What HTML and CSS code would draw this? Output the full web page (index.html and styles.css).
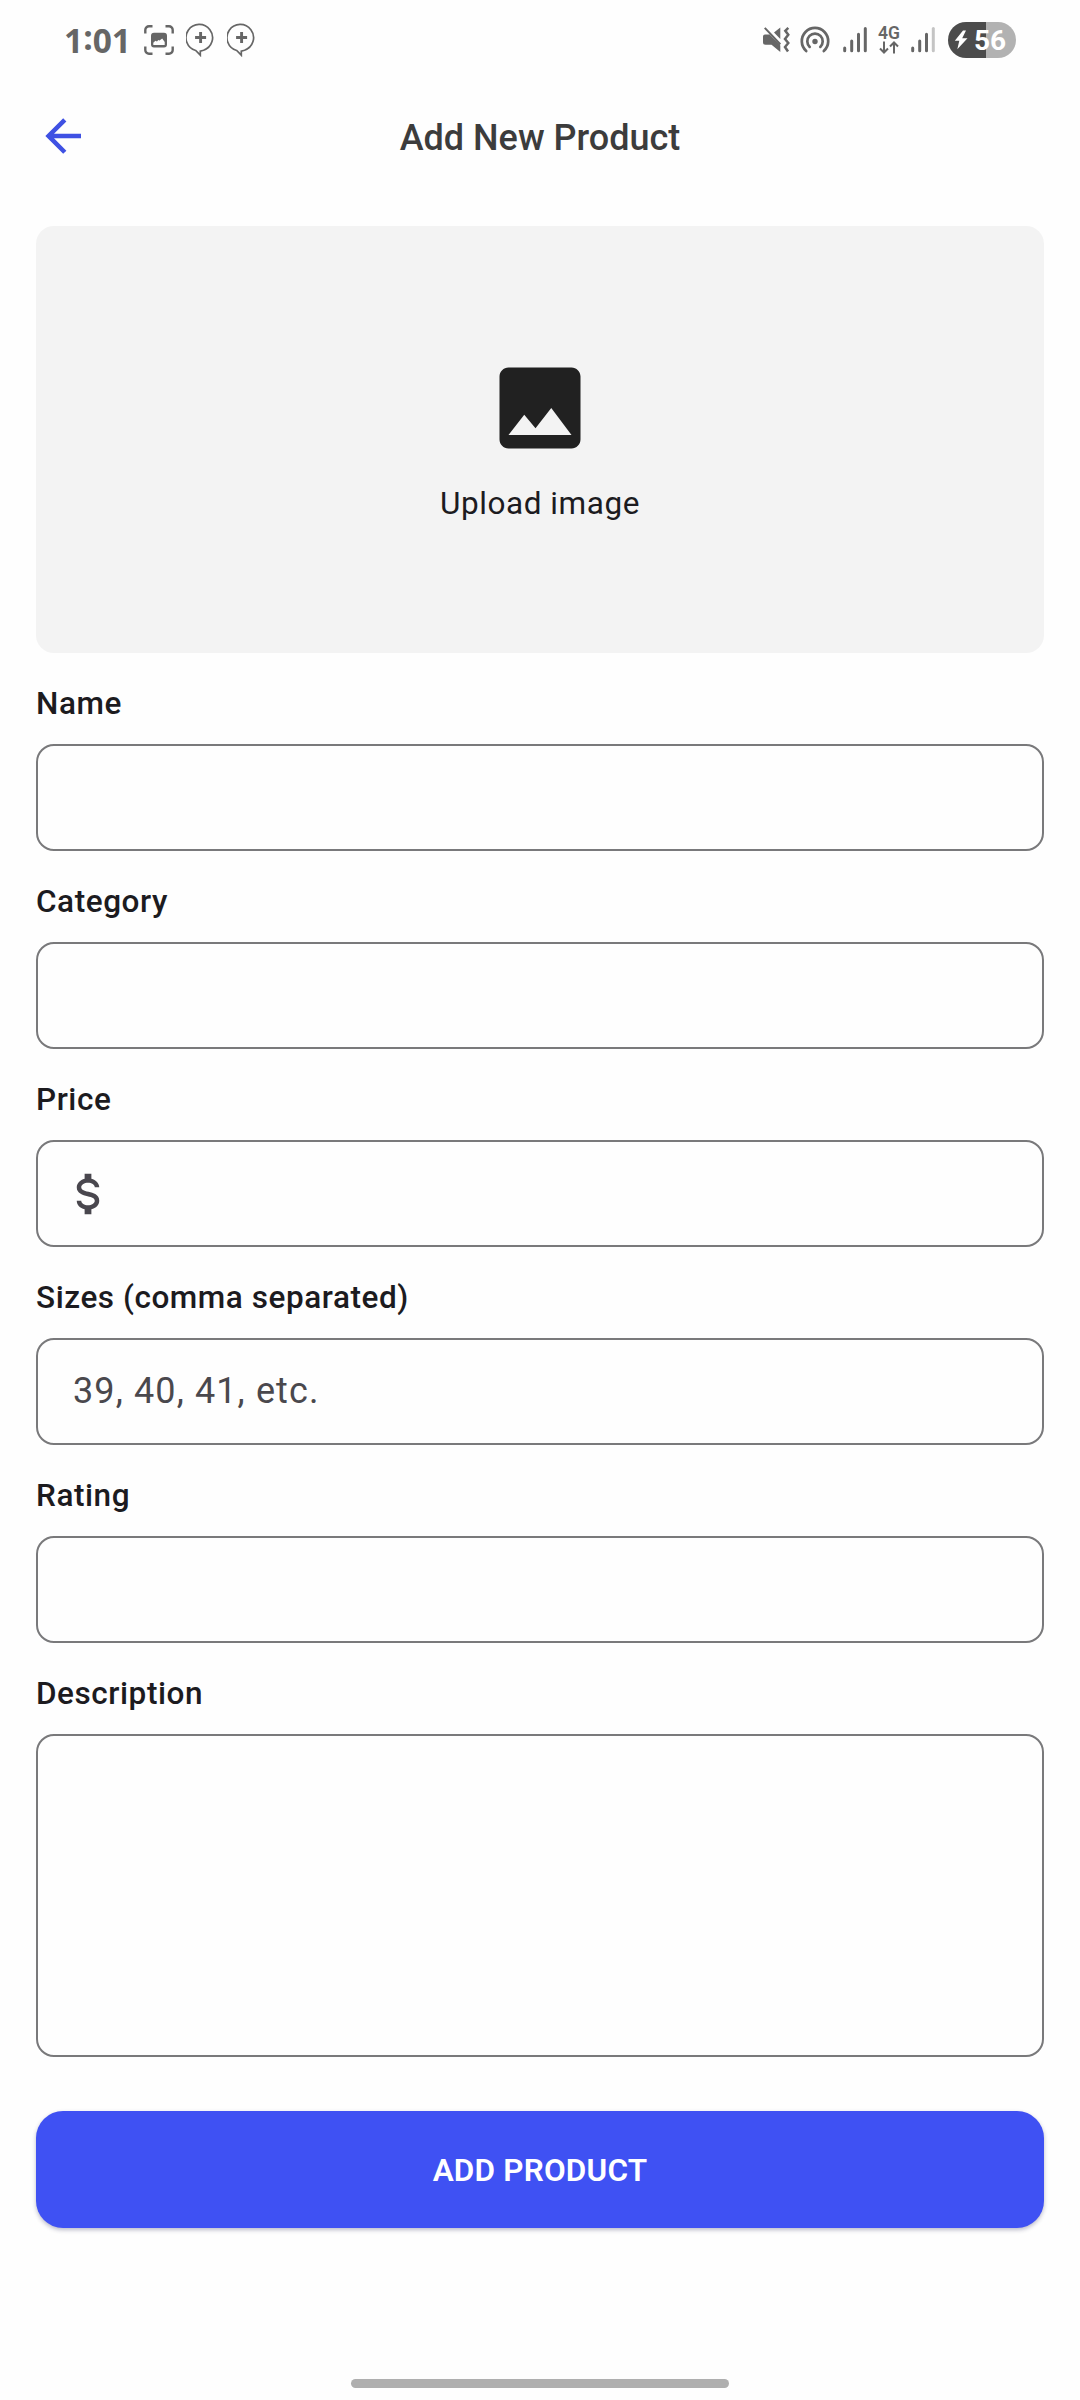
FILE: index.html
```html
<!DOCTYPE html>
<html lang="en">
<head>
<meta charset="utf-8">
<title>Add New Product</title>
<link rel="stylesheet" href="styles.css">
</head>
<body>
<div class="screen">
  <div class="status">
    <span class="clock">1<span class="colon">:</span>01</span>
    <svg class="ic-capture" width="30" height="30" viewBox="0 0 30 30">
      <path d="M1.3 8.500V5a3.700 3.700 0 0 1 3.700-3.700h3.500M21.500 1.300H25A3.700 3.700 0 0 1 28.700 5v3.500M28.700 21.500V25a3.700 3.700 0 0 1-3.700 3.700h-3.500M8.500 28.700H5A3.700 3.700 0 0 1 1.300 25v-3.500" fill="none" stroke="#666" stroke-width="2.400"/>
      <path fill-rule="evenodd" d="M10 7.700h10a3 3 0 0 1 3 3V19.500a3 3 0 0 1-3 3H10a3 3 0 0 1-3-3v-8.800a3 3 0 0 1 3-3zM9.300 20H20.700V17l-2.500-3.500-2.700 2-1.200-.5-1.300 1.500-1.600-.8-2.100 2z" fill="#666"/>
    </svg>
    <svg class="ic-chat" width="30" height="34" viewBox="0 0 30 34">
      <path d="M14.300 28.200v4l-4.600-4.700A13.300 13.300 0 1 1 17.500 27.300z" fill="none" stroke="#666" stroke-width="1.700"/>
      <path d="M14.600 9v11M9.100 14.500h11" stroke="#666" stroke-width="2.900"/>
    </svg>
    <svg class="ic-chat2" width="30" height="34" viewBox="0 0 30 34">
      <path d="M14.300 28.200v4l-4.600-4.700A13.300 13.300 0 1 1 17.500 27.300z" fill="none" stroke="#666" stroke-width="1.700"/>
      <path d="M14.600 9v11M9.100 14.500h11" stroke="#666" stroke-width="2.900"/>
    </svg>
    <span class="spacer"></span>
    <svg class="ic-mute" width="28" height="28" viewBox="0 0 28 28">
      <path d="M3 8.500H7.500L18.300 19.500V26L9.500 18.700H3.500A2.500 2.500 0 0 1 1 16.200v-5.700A2 2 0 0 1 3 8.500zM18.300 1.500V13L12 6.500zM2 2.500 3.500 1.200 19 17.500 17.800 19z" fill="#666"/>
      <path d="M26.300 1.800l-3 3 3 4-3.300 4.200 3.300 4-3.300 4 3 4.500" fill="none" stroke="#666" stroke-width="2.500"/>
    </svg>
    <svg class="ic-hotspot" width="30" height="28" viewBox="0 0 30 28">
      <g fill="none" stroke="#666" stroke-width="2.700" stroke-linecap="round"><path d="M6.200 25A13.200 13.200 0 1 1 23.800 25M9.700 20.900A7.700 7.700 0 1 1 20.300 20.900"/></g>
      <circle cx="15" cy="15.500" r="2.700" fill="#666"/>
    </svg>
    <svg class="ic-signal" width="24" height="28" viewBox="0 0 24 28">
      <g stroke="#666" stroke-width="3" stroke-linecap="round"><path d="M1.700 22v2.700M8.700 15v9.700M15.500 8.200v16.500M22.300 2.500v22.200"/></g>
    </svg>
    <span class="network">
      <span class="gen">4G</span>
      <svg width="20" height="13" viewBox="0 0 20 13"><path d="M5 .5v11M1 7.500l4 4 4-4M15 12.500v-11M11 5.500l4-4 4 4" fill="none" stroke="#666" stroke-width="2"/></svg>
    </span>
    <svg class="ic-signal2" width="24" height="28" viewBox="0 0 24 28">
      <g stroke="#666" stroke-width="3" stroke-linecap="round"><path d="M1.700 22v2.700M8.700 15v9.700M15.500 8.200v16.500"/><path d="M22.300 2.500v22.200" stroke="#c4c4c4"/></g>
    </svg>
    <span class="battery">
      <svg width="14" height="20" viewBox="0 0 14 20"><path d="M9 .5.800 10.800h4.500L3.300 19.200 13.500 8.200H8.200L12 .5z" fill="#fff"/></svg>
      <span>56</span>
    </span>
  </div>

  <header class="appbar">
    <svg class="back" width="54" height="54" viewBox="0 0 24 24"><path fill="#3f51e3" d="M20 11v2H8l5.500 5.500-1.420 1.420L4.160 12l7.920-7.920L13.500 5.500 8 11z"/></svg>
    <h1 class="title">Add New Product</h1>
  </header>

  <main class="form">
    <div class="upload">
      <svg width="108" height="108" viewBox="0 0 24 24"><path fill="#212121" d="M21 19V5c0-1.100-.9-2-2-2H5c-1.100 0-2 .9-2 2v14c0 1.100.9 2 2 2h14c1.100 0 2-.9 2-2zM8.500 13.500l2.500 3.010L14.500 12l4.500 6H5z"/></svg>
      <span>Upload image</span>
    </div>
    <div class="label">Name</div>
    <div class="field"></div>
    <div class="label">Category</div>
    <div class="field"></div>
    <div class="label">Price</div>
    <div class="field field-price">
      <svg width="54" height="54" viewBox="0 0 24 24"><path fill="#49474e" d="M7 15h2c0 1.080 1.370 2 3 2s3-.92 3-2c0-1.100-1.040-1.500-3.240-2.030C9.640 12.440 7 11.780 7 9c0-1.790 1.470-3.310 3.500-3.820V3h3v2.180C15.530 5.690 17 7.210 17 9h-2c0-1.080-1.370-2-3-2s-3 .92-3 2c0 1.100 1.040 1.500 3.240 2.030C14.360 11.560 17 12.220 17 15c0 1.790-1.470 3.310-3.500 3.820V21h-3v-2.180C8.470 18.310 7 16.790 7 15z"/></svg>
    </div>
    <div class="label">Sizes (comma separated)</div>
    <div class="field"><span class="placeholder">39, 40, 41, etc.</span></div>
    <div class="label">Rating</div>
    <div class="field"></div>
    <div class="label">Description</div>
    <div class="field field-area"></div>
    <div class="submit"><span>ADD PRODUCT</span></div>
  </main>
  <div class="homebar"></div>
</div>
</body>
</html>
```
FILE: styles.css
```css
* { box-sizing: border-box; }
body { margin: 0; background: #fefefe; font-family: Roboto, sans-serif; color: #1c1b1f; }
svg { display: block; flex: none; }
.screen { width: 1080px; height: 2400px; display: flex; flex-direction: column; }

.status { height: 80px; padding: 0 64px 0 64px; display: flex; align-items: center; color: #666; }
.clock { width: 80px; font: 700 33.5px/40px "Open Sans", sans-serif; letter-spacing: 0; white-space: nowrap; }
.colon { vertical-align: 3px; line-height: 1; }
.ic-chat { margin-left: 12px; }
.ic-chat2 { margin-left: 11px; }
.spacer { flex: 1; }
.ic-hotspot { margin-left: 10px; }
.ic-signal { margin-left: 13px; }
.network { width: 22px; margin-left: 11px; display: flex; flex-direction: column; align-items: center; gap: 1px; }
.gen { height: 14px; font: 600 17.5px/14px Roboto, sans-serif; }
.ic-signal2 { margin-left: 11px; }
.battery { width: 68px; height: 36px; margin-left: 13px; padding-left: 6px; border-radius: 18px; display: flex; align-items: center; gap: 6px; background: linear-gradient(90deg, #4c4c4c 38px, #b2b2b2 38px); color: #fff; font: 700 28px/37px Roboto, sans-serif; }

.appbar { height: 146px; padding: 29px 36px 0; display: flex; align-items: flex-start; }
.title { flex: 1; margin: 0 54px 0 0; text-align: center; font-size: 36px; line-height: 58px; font-weight: 500; color: #3c3c3c; }

.form { padding: 0 36px; display: flex; flex-direction: column; }
.upload { height: 427px; padding-top: 128px; border-radius: 18px; background: #f3f3f3; display: flex; flex-direction: column; align-items: center; gap: 18px; font-size: 31.5px; line-height: 48px; letter-spacing: 0.56px; }
.label { height: 45px; margin: 28px 0 18px; font-size: 31.5px; line-height: 45px; font-weight: 500; letter-spacing: 0.56px; }
.field { height: 107px; padding: 0 34px; border: 2px solid #79797b; border-radius: 18px; display: flex; align-items: center; }
.field-price { padding-left: 23px; }
.placeholder { padding: 0 0 2px 1px; font-size: 36px; line-height: 54px; letter-spacing: 1.12px; color: #4a484d; }
.field-area { height: 323px; }
.submit { height: 117px; margin-top: 54px; padding-top: 1px; border-radius: 27px; background: #3f51f3; box-shadow: 0 2px 4px rgba(30, 30, 80, .3); display: flex; align-items: center; justify-content: center; color: #fff; font-size: 31.5px; font-weight: 600; letter-spacing: 0.2px; }
.homebar { width: 378px; height: 9px; margin: auto auto 12px; border-radius: 5px; background: #afafaf; }
```
